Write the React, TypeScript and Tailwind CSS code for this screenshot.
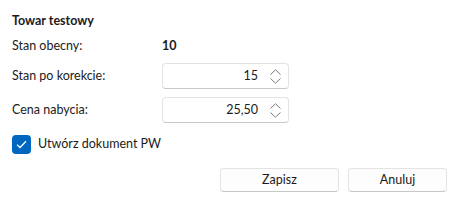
import React from "react";

function Spin() {
  return (
    <div className="flex flex-col items-center justify-center gap-[3px] w-[14px]">
      <svg width="11" height="6" viewBox="0 0 11 6" fill="none">
        <path d="M0.5 5.5 L5.5 0.8 L10.5 5.5" stroke="#7a7a7a" strokeWidth="1" />
      </svg>
      <svg width="11" height="6" viewBox="0 0 11 6" fill="none">
        <path d="M0.5 0.5 L5.5 5.2 L10.5 0.5" stroke="#7a7a7a" strokeWidth="1" />
      </svg>
    </div>
  );
}

function NumInput({ value }: { value: string }) {
  return (
    <div className="w-[127px] h-[26px] rounded-[4px] border border-[#e3e3e3] border-b-[#c8c8c8] bg-white flex items-center justify-end pr-[6px]">
      <span className="text-[12.5px] text-[#1b1b1b] mr-[10px]">{value}</span>
      <Spin />
    </div>
  );
}

export default function App() {
  return (
    <div
      className="w-[460px] h-[220px] bg-white text-[#1b1b1b] px-[12px] pt-[12px]"
      style={{ fontFamily: '"Segoe UI", Lato, "Noto Sans", sans-serif' }}
    >
      <div className="text-[12.5px] font-bold leading-[18px] h-[18px]">Towar testowy</div>
      <div className="grid grid-cols-[150px_1fr] items-center mt-[3px]">
        <div className="text-[12.5px] h-[26px] flex items-center">Stan obecny:</div>
        <div className="text-[12.5px] font-bold h-[26px] flex items-center">10</div>
        <div className="text-[12.5px] h-[26px] flex items-center mt-[4px]">Stan po korekcie:</div>
        <div className="mt-[4px]"><NumInput value="15" /></div>
        <div className="text-[12.5px] h-[26px] flex items-center mt-[8px]">Cena nabycia:</div>
        <div className="mt-[8px]"><NumInput value="25,50" /></div>
      </div>
      <div className="flex items-center mt-[12px] gap-[7px] h-[19px]">
        <div className="w-[19px] h-[19px] rounded-[4px] bg-[#0067c0] flex items-center justify-center">
          <svg width="11" height="9" viewBox="0 0 11 9" fill="none">
            <path d="M1 4.6 L4 7.5 L10 1.3" stroke="white" strokeWidth="1.3" />
          </svg>
        </div>
        <span className="text-[12.5px]">Utwórz dokument PW</span>
      </div>
      <div className="flex justify-end gap-[9px] mt-[14px] pr-[1px]">
        <button className="w-[119px] h-[24px] rounded-[4px] border border-[#e3e3e3] border-b-[#c8c8c8] bg-[#fdfdfd] text-[12.5px] text-[#1b1b1b]">Zapisz</button>
        <button className="w-[99px] h-[24px] rounded-[4px] border border-[#e3e3e3] border-b-[#c8c8c8] bg-[#fdfdfd] text-[12.5px] text-[#1b1b1b]">Anuluj</button>
      </div>
    </div>
  );
}
